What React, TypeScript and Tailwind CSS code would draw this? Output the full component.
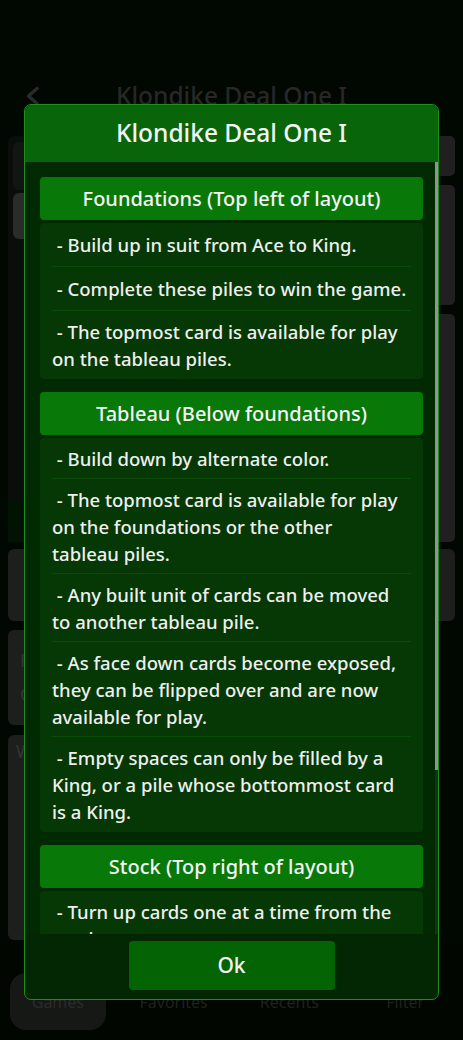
import React from "react";

type Section = { title: string; items: string[][] };

const sections: Section[] = [
  {
    title: "Foundations (Top left of layout)",
    items: [
      ["- Build up in suit from Ace to King."],
      ["- Complete these piles to win the game."],
      ["- The topmost card is available for play", "on the tableau piles."],
    ],
  },
  {
    title: "Tableau (Below foundations)",
    items: [
      ["- Build down by alternate color."],
      ["- The topmost card is available for play", "on the foundations or the other", "tableau piles."],
      ["- Any built unit of cards can be moved", "to another tableau pile."],
      ["- As face down cards become exposed,", "they can be flipped over and are now", "available for play."],
      ["- Empty spaces can only be filled by a", "King, or a pile whose bottommost card", "is a King."],
    ],
  },
  {
    title: "Stock (Top right of layout)",
    items: [
      ["- Turn up cards one at a time from the", "stock."],
      ["- The topmost card of the waste pile is", "available for play."],
    ],
  },
];

function Background() {
  return (
    <div className="flex h-full flex-col">
      {/* header */}
      <div className="h-[136px] pt-[72px]">
        <div className="grid h-[48px] grid-cols-[1fr_auto_1fr] items-center">
          <div className="pl-[25px]">
            <svg width="16" height="18" viewBox="0 0 16 18" fill="none">
              <path d="M12 1.5 L3.5 9 L12 16.5" stroke="#2a2a2a" strokeWidth="3.5" strokeLinecap="round" strokeLinejoin="round" />
            </svg>
          </div>
          <div className="text-[24.5px] font-medium leading-[32px] text-[#272727]">Klondike Deal One I</div>
          <div />
        </div>
      </div>
      {/* content */}
      <div className="flex flex-col px-[8px]">
        <div className="flex h-[406px] gap-[12px]">
          <div className="flex flex-1 flex-col">
            <div className="flex h-[364px] flex-col gap-[3px] rounded-tl-[6px] bg-[#0a0e0a] pl-[5px] pt-[6px]">
              <div className="h-[48px] rounded-[6px] bg-[#121612]" />
              <div className="h-[46px] rounded-[6px] bg-[#2a2c2a]" />
            </div>
            <div className="h-[42px] bg-[#031303]" />
          </div>
          <div className="flex w-[200px] flex-col gap-[9px]">
            <div className="h-[40px] rounded-[5px] bg-[#1f201f]" />
            <div className="h-[120px] rounded-[5px] bg-[#1f201f]" />
            <div className="h-[229px] rounded-[5px] bg-[#1f201f]" />
          </div>
        </div>
        <div className="mt-[7px] h-[72px] rounded-[6px] bg-[#1d1f1d]" />
        <div className="mr-[20px] mt-[9px] flex h-[95px] flex-col gap-[10px] rounded-[6px] bg-[#1d1f1d] pl-[12px] pt-[18px] text-[18px] leading-[24px] text-[#333533]">
          <div>Foo</div>
          <div>Goo</div>
        </div>
        <div className="mr-[20px] mt-[10px] h-[205px] rounded-[6px] bg-[#1d1f1d] pl-[8px] pt-[4px] text-[18px] leading-[24px] text-[#333533]">
          Wins
        </div>
      </div>
      {/* bottom nav */}
      <div className="mt-auto grid h-[95px] grid-cols-4 bg-[#010601] pt-[28px]">
        <div className="flex justify-center">
          <div className="flex h-[57px] w-[96px] items-center justify-center rounded-[16px] bg-[#161816] text-[16px] text-[#2a2c2a]">
            Games
          </div>
        </div>
        <div className="flex h-[57px] items-center justify-center text-[16px] text-[#1f211f]">Favorites</div>
        <div className="flex h-[57px] items-center justify-center text-[16px] text-[#1f211f]">Recents</div>
        <div className="flex h-[57px] items-center justify-center text-[16px] text-[#1f211f]">Filter</div>
      </div>
    </div>
  );
}

function Dialog() {
  return (
    <div className="absolute left-[24px] top-[104px] flex h-[896px] w-[415px] flex-col overflow-hidden rounded-[7px] border border-[#1e8e1e] bg-[#022702]">
      <div className="flex h-[57px] shrink-0 items-center justify-center bg-[#096509] text-[24.5px] font-medium text-[#f4f4f4]">
        Klondike Deal One I
      </div>
      <div className="relative h-[772px] shrink-0 overflow-hidden bg-[#022a02]">
        <div className="flex flex-col gap-[13px] px-[15px] pt-[15px]">
          {sections.map((s, si) => (
            <div key={si} className="flex flex-col">
              <div className="flex h-[43px] items-center justify-center rounded-[4px] bg-[#087808] text-[20px] font-medium text-[#f4f4f4]">
                {s.title}
              </div>
              <div className="mt-[3px] flex flex-col rounded-[4px] bg-[#053805]">
                {s.items.map((lines, i) => {
                  const last = i === s.items.length - 1;
                  const tall = si === 0 && i < 2;
                  return (
                    <div
                      key={i}
                      className={
                        "mx-[12px] text-[18.5px] font-medium leading-[27px] text-[#efefef] " +
                        (last
                          ? "pb-[7px] pt-[7px]"
                          : tall
                          ? "border-b border-[#0c4a0c] pb-[8px] pt-[8px]"
                          : "border-b border-[#0c4a0c] pb-[6px] pt-[7px]")
                      }
                    >
                      {lines.map((l, li) => (
                        <div key={li} className="whitespace-nowrap">
                          {li === 0 ? "\u00a0" + l : l}
                        </div>
                      ))}
                    </div>
                  );
                })}
              </div>
            </div>
          ))}
        </div>
        <div className="absolute right-0 top-0 h-full w-[3px] bg-[#0a3a0a]" />
        <div className="absolute right-0 top-0 h-[608px] w-[3px] bg-[#8d978d]" />
      </div>
      <div className="flex flex-1 justify-center pt-[7px]">
        <div className="flex h-[49px] w-[206px] items-center justify-center rounded-[4px] bg-[#046404] text-[21px] font-medium text-[#f4f4f4]">
          Ok
        </div>
      </div>
    </div>
  );
}

export default function App() {
  return (
    <div
      className="relative h-[1040px] w-[463px] overflow-hidden bg-[#010701]"
      style={{ fontFamily: "'Noto Sans', 'Open Sans', sans-serif" }}
    >
      <Background />
      <Dialog />
    </div>
  );
}
